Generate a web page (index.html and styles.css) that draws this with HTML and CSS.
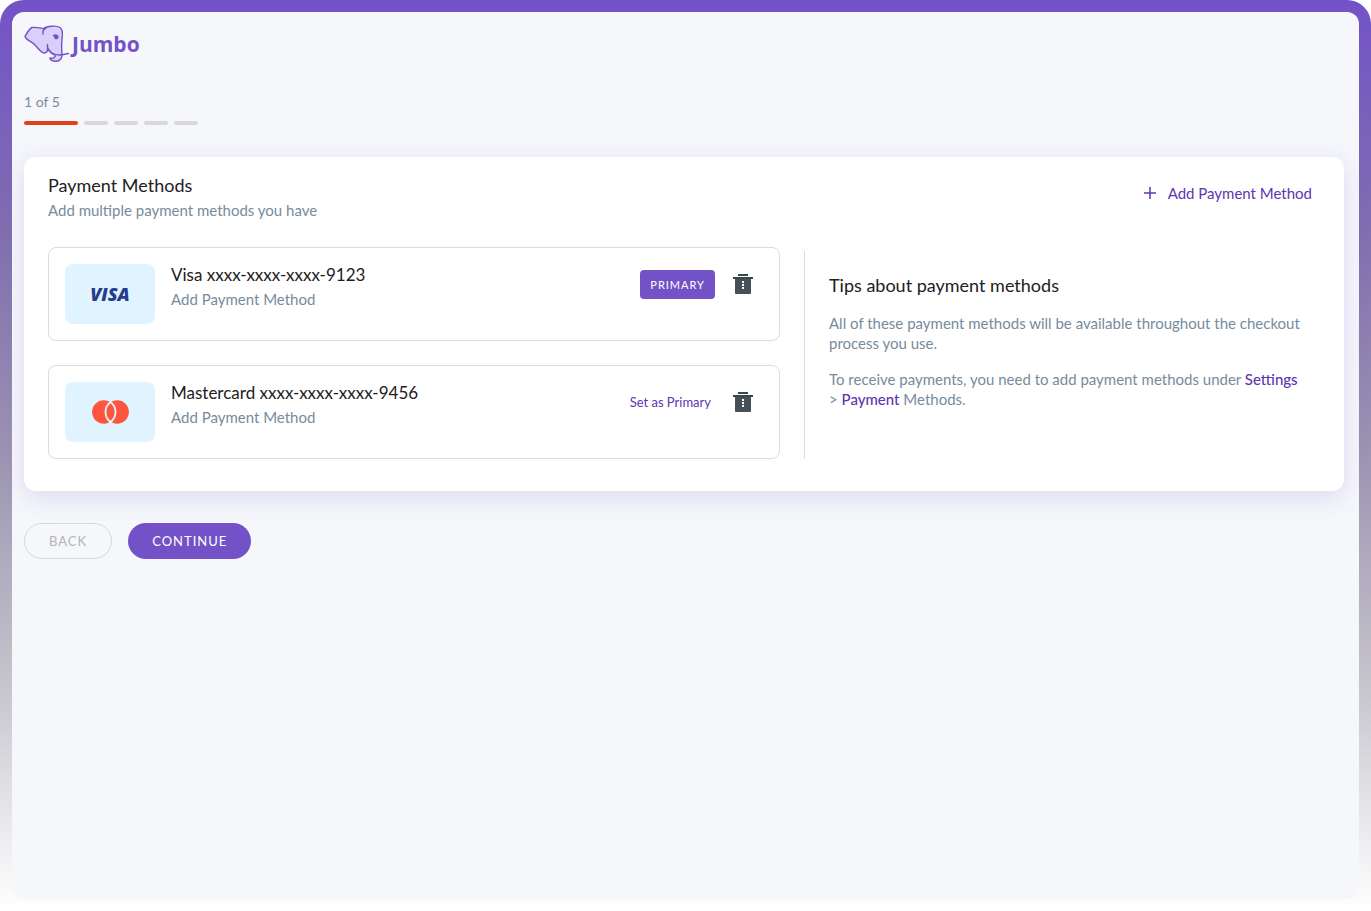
FILE: index.html
```html
<!DOCTYPE html>
<html lang="en">
<head>
    <meta charset="UTF-8">
    <meta name="viewport" content="width=device-width, initial-scale=1.0">
    <title>Jumbo - Payment Methods</title>
    <link rel="stylesheet" href="styles.css">
</head>
<body>
    <div class="page">
        <header class="logo">
            <svg class="logo-mark" viewBox="0 -1 48 40" aria-hidden="true">
                <path class="skin" d="M1 11.500C3 8 5 4 8 2.500C12 2 16 3 19.500 3.500C23 1 33 .2 36 2.500C40 5 38 11 38 15C37 21 38 26 38 31C37.500 35 34 37 30 36C27 35.500 26 34 26 33C29 34 32 32 31 30C27 29 25 26 23.500 23C24 26 23 28 20 28C17 27.500 14 23 11 20C7 16 2 15 1 11.500Z"/>
                <path class="line" d="M19 9C18.500 6 19 4.500 22 3M23.500 19.500C23 23 25 26 28 28C33 31 38 30 44.500 28.500"/>
                <path class="eye" d="M29.500 10.500C31 9.500 34 10 34 12.500C33 14.500 30.500 13.500 31 12Z"/>
            </svg>
            <span class="logo-text">Jumbo</span>
        </header>

        <div class="steps">
            <span class="steps-label">1 of 5</span>
            <div class="steps-bar">
                <span class="step active"></span>
                <span class="step"></span>
                <span class="step"></span>
                <span class="step"></span>
                <span class="step"></span>
            </div>
        </div>

        <main class="card">
            <div class="card-header">
                <div>
                    <h1 class="title">Payment Methods</h1>
                    <p class="muted">Add multiple payment methods you have</p>
                </div>
                <button type="button" class="add-button">
                    <svg width="12" height="12" viewBox="0 0 12 12" aria-hidden="true"><path d="M6 0V12M0 6H12" stroke="currentColor" stroke-width="1.500"/></svg>
                    Add Payment Method
                </button>
            </div>

            <div class="card-body">
                <ul class="methods">
                    <li class="method">
                        <div class="thumb">
                            <span class="visa">VISA</span>
                        </div>
                        <div class="method-info">
                            <h2 class="method-name">Visa xxxx-xxxx-xxxx-9123</h2>
                            <p class="muted">Add Payment Method</p>
                        </div>
                        <div class="method-actions">
                            <button type="button" class="primary-badge">PRIMARY</button>
                            <button type="button" class="delete-button" aria-label="Delete">
                                <svg width="20" height="20" viewBox="0 0 20 20" aria-hidden="true"><path fill="#37474f" d="M5 0h10v2H5zM0 3h20v2H0z"/><path fill="#455059" d="M2 5h16v14a1 1 0 0 1-1 1H3a1 1 0 0 1-1-1z"/><path fill="#fff" d="M9 7h2v2H9zM9 10h2v2H9zM9 13h2v2H9z"/></svg>
                            </button>
                        </div>
                    </li>
                    <li class="method">
                        <div class="thumb">
                            <svg width="37" height="24" viewBox="0 0 37 24" aria-hidden="true">
                                <circle cx="11.800" cy="12" r="11.700" fill="#ff553e"/>
                                <circle cx="25.200" cy="12" r="11.700" fill="#ff553e"/>
                                <path d="M18.500 2A12.500 12.500 0 0 1 18.500 22A12.500 12.500 0 0 1 18.500 2Z" fill="none" stroke="#e0f4ff" stroke-width="1.800"/>
                            </svg>
                        </div>
                        <div class="method-info">
                            <h2 class="method-name">Mastercard xxxx-xxxx-xxxx-9456</h2>
                            <p class="muted">Add Payment Method</p>
                        </div>
                        <div class="method-actions">
                            <button type="button" class="set-primary">Set as Primary</button>
                            <button type="button" class="delete-button" aria-label="Delete">
                                <svg width="20" height="20" viewBox="0 0 20 20" aria-hidden="true"><path fill="#37474f" d="M5 0h10v2H5zM0 3h20v2H0z"/><path fill="#455059" d="M2 5h16v14a1 1 0 0 1-1 1H3a1 1 0 0 1-1-1z"/><path fill="#fff" d="M9 7h2v2H9zM9 10h2v2H9zM9 13h2v2H9z"/></svg>
                            </button>
                        </div>
                    </li>
                </ul>

                <aside class="tips">
                    <h2 class="title">Tips about payment methods</h2>
                    <p class="muted">All of these payment methods will be available throughout the checkout process you use.</p>
                    <p class="muted">To receive payments, you need to add payment methods under <a href="#">Settings</a> &gt; <a href="#">Payment</a> Methods.</p>
                </aside>
            </div>
        </main>

        <div class="buttons">
            <button type="button" class="btn btn-back">BACK</button>
            <button type="button" class="btn btn-continue">CONTINUE</button>
        </div>
    </div>
</body>
</html>
```
FILE: styles.css
```css
* {
    box-sizing: border-box;
}
html {
    background-color: #fff;
}
body {
    margin: 0;
    min-height: 100vh;
    padding: 12px;
    display: flex;
    font-family: Lato, "Open Sans", sans-serif;
    font-size: 15px;
    line-height: 20px;
    color: #1e2022;
}
body::before {
    content: "";
    position: absolute;
    inset: 0;
    z-index: -1;
    border-radius: 24px 24px 0 0;
    background: linear-gradient(#7352c7 0%, #806eb0 25%, #9c94b2 50%, #c6c4cc 75%, #fff 100%);
}
h1, h2, p, ul {
    margin: 0;
    padding: 0;
}
button {
    font-family: inherit;
    border: none;
    background: none;
    padding: 0;
    cursor: pointer;
}
a {
    color: #5e35b1;
    font-weight: 500;
    text-decoration: none;
}
.page {
    flex: 1;
    padding: 12px 15px 12px 12px;
    border-radius: 12px;
    background-color: #f5f7fb;
}
.logo {
    display: flex;
    align-items: center;
    height: 40px;
}
.logo-mark {
    width: 48px;
    height: 40px;
}
.logo-mark path {
    stroke: #7352c7;
    stroke-width: 1.4;
    stroke-linecap: round;
    stroke-linejoin: round;
}
.logo-mark .skin {
    fill: #dacffa;
}
.logo-mark .line {
    fill: none;
}
.logo-mark .eye {
    fill: #7352c7;
}
.logo-text {
    font-family: "Open Sans", sans-serif;
    font-size: 21px;
    font-weight: 700;
    color: #7352c7;
}
.steps {
    margin-top: 28px;
}
.steps-label {
    display: block;
    font-size: 14px;
    color: #778b9d;
}
.steps-bar {
    display: flex;
    gap: 6px;
    margin-top: 9px;
}
.step {
    width: 24px;
    height: 4px;
    border-radius: 2px;
    background-color: #d8d8d8;
}
.step.active {
    width: 54px;
    background-color: #e04117;
}
.card {
    margin-top: 32px;
    padding: 16px 24px 32px;
    border-radius: 12px;
    background-color: #fff;
    box-shadow: 0 6px 24px rgba(115, 82, 199, 0.18);
}
.card-header {
    display: flex;
    justify-content: space-between;
    align-items: flex-start;
}
.title {
    font-size: 18px;
    line-height: 24px;
    font-weight: 400;
    color: #1e2022;
}
.muted {
    color: #778b9d;
}
.card-header .muted {
    margin-top: 3px;
}
.add-button {
    display: flex;
    align-items: center;
    gap: 12px;
    padding: 10px 8px;
    font-size: 15px;
    line-height: 20px;
    color: #5e35b1;
}
.card-body {
    display: grid;
    grid-template-columns: 732fr 516fr;
    gap: 24px;
    margin-top: 27px;
}
.card-header + .card-body {
    align-items: stretch;
}
.methods {
    display: flex;
    flex-direction: column;
    gap: 24px;
    list-style: none;
}
.method {
    display: flex;
    gap: 16px;
    padding: 16px;
    border: 1px solid #d9dde3;
    border-radius: 8px;
}
.thumb {
    display: flex;
    align-items: center;
    justify-content: center;
    width: 90px;
    height: 60px;
    border-radius: 8px;
    background-color: #e0f4ff;
}
.visa {
    font-family: "Open Sans", sans-serif;
    font-size: 18px;
    font-weight: 800;
    font-style: italic;
    color: #253b8e;
}
.method-info {
    flex: 1;
}
.method-name {
    font-size: 17px;
    line-height: 22px;
    font-weight: 400;
}
.method-info .muted {
    margin-top: 3px;
}
.method-actions {
    display: flex;
    align-items: center;
    gap: 18px;
    height: 40px;
    padding-right: 10px;
}
.primary-badge {
    height: 29px;
    padding: 0 10px;
    border-radius: 4px;
    background-color: #7352c7;
    color: #fff;
    font-size: 11px;
    letter-spacing: 1px;
}
.set-primary {
    margin-right: 4px;
    font-size: 13px;
    color: #5e35b1;
}
.delete-button {
    display: flex;
}
.tips {
    margin-top: 4px;
    padding: 22px 20px 0 24px;
    border-left: 1px solid #d9dde3;
}
.tips .muted {
    margin-top: 16px;
}
.buttons {
    display: flex;
    gap: 16px;
    margin-top: 32px;
}
.btn {
    height: 36px;
    padding: 0 24px;
    border-radius: 18px;
    font-size: 13px;
    letter-spacing: 1px;
}
.btn-back {
    border: 1px solid #d5d6d9;
    color: #b4b5b8;
}
.btn-continue {
    background-color: #7352c7;
    color: #fff;
}
```
